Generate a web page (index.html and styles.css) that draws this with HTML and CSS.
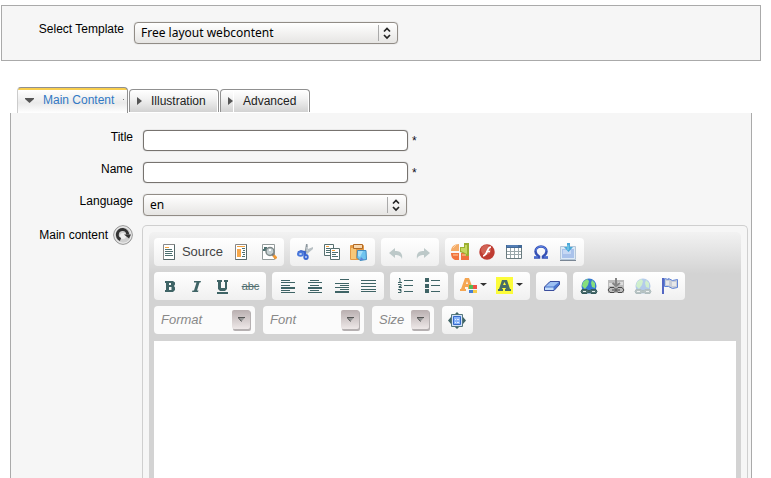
FILE: index.html
```html
<!DOCTYPE html>
<html lang="en">
<head>
<meta charset="utf-8">
<title>Edit web content</title>
<link rel="stylesheet" href="styles.css">
</head>
<body>
<form class="page">
  <section class="template-bar">
    <label class="label" for="template">Select Template</label>
    <span class="dropdown">
      <select id="template"><option>Free layout webcontent</option></select>
      <svg class="updown" width="20" height="18" viewBox="0 0 20 18"><path d="M.5 1v16" stroke="#aaa" fill="none"/><path d="M6 7.500l3-3 3 3M6 11l3 3 3-3" stroke="#222" stroke-width="1.700" fill="none"/></svg>
    </span>
  </section>

  <nav class="tabs">
    <button type="button" class="tab tab-active"><svg width="9" height="5" viewBox="0 0 9 5"><path d="M0 0h9v1L4.500 5 0 1z" fill="#555"/></svg>Main Content<svg width="2" height="2" viewBox="0 0 2 2"><path d="M0 0h1v1H0z" fill="#777"/></svg></button>
    <button type="button" class="tab"><svg width="5" height="8" viewBox="0 0 5 8"><path d="M0 0l5 4-5 4z" fill="#555"/></svg>Illustration</button>
    <button type="button" class="tab tab-split"><svg width="6" height="22" viewBox="0 0 6 22"><path d="M0 7l5 4-5 4z" fill="#555"/><path d="M5.500 0v22" stroke="#fff"/></svg>Advanced</button>
  </nav>

  <section class="panel">
    <div class="row">
      <label class="label" for="title">Title</label>
      <input class="field" id="title" type="text"><span class="star">*</span>
    </div>
    <div class="row">
      <label class="label" for="name">Name</label>
      <input class="field" id="name" type="text"><span class="star">*</span>
    </div>
    <div class="row">
      <label class="label" for="language">Language</label>
      <span class="dropdown">
        <select id="language"><option>en</option></select>
        <svg class="updown" width="20" height="18" viewBox="0 0 20 18"><path d="M.5 1v16" stroke="#aaa" fill="none"/><path d="M6 7.500l3-3 3 3M6 11l3 3 3-3" stroke="#222" stroke-width="1.700" fill="none"/></svg>
      </span>
    </div>
    <div class="row row-editor">
      <div class="label label-refresh">
        <label for="content">Main content</label>
        <button type="button" class="refresh" aria-label="Refresh"><svg width="20" height="20" viewBox="0 0 20 20"><circle cx="10" cy="10" r="9.300" fill="#cfcfcf" stroke="#8e8e8e"/><circle cx="10" cy="10" r="8.200" fill="none" stroke="#eee"/><circle cx="10" cy="11" r="3" fill="#eee"/><path d="M7.500 14.500A5.200 5.200 0 1 1 14.700 9.500" fill="none" stroke="#333" stroke-width="3"/><path d="M11 9.500h7l-2 4z" fill="#333"/></svg></button>
      </div>
      <div class="editor">
        <div class="editor-body">
          <div class="toolbar">
            <div class="tools">
              <div class="group">
                <button type="button" class="tool tool-source"><svg width="16" height="16" viewBox="0 0 16 16"><path d="M2.500.5h11v15h-11z" fill="#fff" stroke="#888"/><path d="M13.500.5v15h-11" fill="none" stroke="#56696a"/><path d="M4 3.500h4" stroke="#f5a13a"/><path d="M4 5.500h7M4 7.500h8M4 9.500h7M4 11.500h8" stroke="#4d7070"/></svg>Source</button>
                <button type="button" class="tool" aria-label="Templates"><svg width="16" height="16" viewBox="0 0 16 16"><path d="M1.500.5h11v15h-11z" fill="#fff" stroke="#888"/><path d="M12.500.5v15h-11" fill="none" stroke="#56696a"/><path d="M8 4.500h3M9 6.500h2M8 8.500h3M9 10.500h2M8 12.500h3" stroke="#4d7070"/><path d="M3 5h4v8H3z" fill="#f7a84b"/><path d="M3 2.500h8" stroke="#f5a13a"/></svg></button>
                <button type="button" class="tool" aria-label="Preview"><svg width="16" height="16" viewBox="0 0 16 16"><path d="M1.500.5h12v15h-12z" fill="#fff" stroke="#939b9b"/><path d="M2 5h5v2H2zM3 3h3v2H3z" fill="#4d7070"/><circle cx="9" cy="7.500" r="4" fill="#c5d0d2" stroke="#7e8989" stroke-width="1.500"/><path d="M8 5h2v2H8z" fill="#fff"/><path d="M11 10l2 2" stroke="#777" stroke-width="2"/><path d="M12.500 11.500l3 3" stroke="#f09a36" stroke-width="3"/></svg></button>
              </div>
              <div class="group group-tight">
                <button type="button" class="tool" aria-label="Cut"><svg width="16" height="16" viewBox="0 0 16 16"><path d="M9 0l1.500 0 .5 7-2 3-2-2 1-2z" fill="#8b969d"/><path d="M16 3v2L10 10l-2-1 3-4z" fill="#b8c0c4"/><path d="M10 3v4" stroke="#e4e8ea"/><path d="M1 8.500l3-1.500 5 1.500M8 9v5" stroke="#3b62c8" stroke-width="2" fill="none"/><ellipse cx="3.500" cy="10" rx="2.500" ry="1.700" fill="none" stroke="#4978dc" stroke-width="2"/><ellipse cx="9" cy="13" rx="1.700" ry="2" fill="#fff" stroke="#3c68d2" stroke-width="2"/></svg></button>
                <button type="button" class="tool" aria-label="Copy"><svg width="18" height="16" viewBox="0 0 18 16"><path d="M1.500.5h9v11h-9z" fill="#fff" stroke="#566f6f"/><path d="M3 2.500h3" stroke="#f5a13a"/><path d="M3 4.500h4M3 6.500h5M3 8.500h4" stroke="#4d7070"/><path d="M7.500 4.500h9v11h-9z" fill="#fff" stroke="#566f6f"/><path d="M9 6.500h3" stroke="#f5a13a"/><path d="M9 8.500h6M9 10.500h4M9 12.500h6" stroke="#4d7070"/></svg></button>
                <button type="button" class="tool" aria-label="Paste"><svg width="17" height="17" viewBox="0 0 17 17"><rect x="0" y="1" width="14" height="15" rx="1" fill="#e59a45"/><path d="M1 4h5v11H1z" fill="#f8c878"/><path d="M3.500.5h9v4h-9z" fill="#f8d8ae" stroke="#b26925"/><path d="M7.500 6.500H16l.5 9L10 16.500l-3-3z" fill="#70c4ef" stroke="#438cc0"/><path d="M8 7h5l-3 6-2-1z" fill="#a4def8"/><path d="M10 16l1-3 3 3" fill="#5f83d7"/></svg></button>
              </div>
              <div class="group group-tight">
                <button type="button" class="tool" aria-label="Undo"><svg width="16" height="16" viewBox="0 0 16 16"><path d="M1 9l6-5v3c5 0 8 2 7 8-1-3-3-4-7-4v3z" fill="#bdc9c9"/></svg></button>
                <button type="button" class="tool" aria-label="Redo"><svg width="16" height="16" viewBox="0 0 16 16"><path d="M15 9L9 4v3c-5 0-8 2-7 8 1-3 3-4 7-4v3z" fill="#bdc9c9"/></svg></button>
              </div>
              <div class="group group-tight">
                <button type="button" class="tool" aria-label="Image"><svg width="18" height="18" viewBox="0 0 18 18"><path d="M8 1v7H0c0-4 3-7 8-7z" fill="#f4ac68"/><path d="M0 10h8v7H4c-3-1-4-4-4-7z" fill="#f1743e"/><path d="M10 10h8v7h-8z" fill="#ef703d"/><path d="M9 4h4V0h5v13h-4v-2l-5-2z" fill="#9caf30"/><path d="M10 5h4V2h2v9l-6-3z" fill="#c6d860"/><path d="M2 5l3-3M2 12h5M11 12h4" stroke="#ffd0a0"/></svg></button>
                <button type="button" class="tool" aria-label="Flash"><svg width="16" height="16" viewBox="0 0 16 16"><circle cx="8" cy="8" r="7.700" fill="#bf3c32"/><circle cx="7" cy="6" r="5" fill="#d16254"/><path d="M12 3c-3 0-3 3-4 5s-2 4-4 4M7 7.500h4" stroke="#fff" stroke-width="1.700" fill="none"/></svg></button>
                <button type="button" class="tool" aria-label="Table"><svg width="16" height="16" viewBox="0 0 16 16"><path d="M.5 1.500h15v13H.5z" fill="#fff" stroke="#697a7f"/><path d="M0 1h16v3H0z" fill="#416896"/><path d="M1 2h11" stroke="#6491d2"/><path d="M1 7.500h14M1 10.500h14M4.500 4v10M8.500 4v10M12.500 4v10" stroke="#9aa7aa"/></svg></button>
                <button type="button" class="tool" aria-label="Special character"><svg width="16" height="16" viewBox="0 0 16 16"><path d="M1 13.500h5v-1C4 11 2.500 9.500 2.500 7.500c0-3 2.500-5 5.500-5s5.500 2 5.500 5c0 2-1.500 3.500-3.500 5v1h5" fill="none" stroke="#3550b4" stroke-width="2.500"/><path d="M3 7c0-3 2-4.500 5-4.500S13 4 13 7M1 13h4M11 13h4" fill="none" stroke="#5e86e8"/></svg></button>
                <button type="button" class="tool" aria-label="Page break"><svg width="16" height="18" viewBox="0 0 16 18"><path d="M.5 3.500h15v13H.5z" fill="#dce9f6" stroke="#b4c6d8"/><path d="M2 6h12v9H2z" fill="#a9c2eb"/><path d="M3 7h8v4H3z" fill="#c6d8f4"/><path d="M0 17.500h16" stroke="#798694"/><path d="M7 0h3v4h3l-4.500 5L4 4h3z" fill="#4ba8d8"/><path d="M8 2v5" stroke="#8bd7ef"/></svg></button>
              </div>
            </div>
            <div class="tools">
              <div class="group">
                <button type="button" class="tool" aria-label="Bold"><svg width="16" height="16" viewBox="0 0 16 16"><path d="M3 3h8l2 1.500v2L12 8l1 1.500V12l-2 2H3v-2h1V5H3zM7 5v2h2V5zM7 9v3h2.500V9z" fill="#3f6466" fill-rule="evenodd"/></svg></button>
                <button type="button" class="tool" aria-label="Italic"><svg width="16" height="16" viewBox="0 0 16 16"><path d="M5 3h7l-.5 1.500H10.500L8 12.500h1.500L9 14H3l.5-1.500H5L7.500 4.500H5z" fill="#3f6466"/></svg></button>
                <button type="button" class="tool" aria-label="Underline"><svg width="16" height="16" viewBox="0 0 16 16"><path d="M1 2h5v2H5v6h4V4H8V2h4v2h-1v7l-2 2H4l-2-2V4H1z" fill="#3f6466"/><path d="M1 15h11" stroke="#3f6466" stroke-width="2"/></svg></button>
                <button type="button" class="tool tool-strike" aria-label="Strike through"><s>abc</s></button>
              </div>
              <div class="group">
                <button type="button" class="tool" aria-label="Align left"><svg width="16" height="16" viewBox="0 0 16 16"><path d="M1 2.500h9M1 4.500h14M1 7.500h9M1 12.500h9M1 14.500h14" stroke="#3f6466"/><path d="M1 10h14" stroke="#3f6466" stroke-width="2"/></svg></button>
                <button type="button" class="tool" aria-label="Center"><svg width="16" height="16" viewBox="0 0 16 16"><path d="M3 2.500h9M1 4.500h14M3 7.500h9M3 12.500h9M1 14.500h14" stroke="#3f6466"/><path d="M1 10h14" stroke="#3f6466" stroke-width="2"/></svg></button>
                <button type="button" class="tool" aria-label="Align right"><svg width="16" height="16" viewBox="0 0 16 16"><path d="M6 1.500h9M1 5.500h14M6 7.500h9M6 11.500h9" stroke="#3f6466"/><path d="M1 9.500h14" stroke="#3f6466"/><path d="M1 14h14" stroke="#3f6466" stroke-width="2"/></svg></button>
                <button type="button" class="tool" aria-label="Justify"><svg width="16" height="16" viewBox="0 0 16 16"><path d="M0 2.500h15M0 5.500h15M0 8.500h15M0 11.500h15M0 13.500h15" stroke="#3f6466"/></svg></button>
              </div>
              <div class="group">
                <button type="button" class="tool" aria-label="Numbered list"><svg width="17" height="16" viewBox="0 0 17 16"><path d="M7 2.500h9M7 7.500h9M7 13.500h9M2 .5h1v4M1 4.500h4M1 6.500h3v2H2v1h3M1 11.500h3v1H2.500M4 12.500v2H1" stroke="#3f6466" fill="none"/></svg></button>
                <button type="button" class="tool" aria-label="Bulleted list"><svg width="16" height="16" viewBox="0 0 16 16"><path d="M0 0h4v4H0zM0 6h4v4H0zM0 11h4v4H0z" fill="#3f6466"/><path d="M6 2.500h9M6 7.500h9M6 13.500h9" stroke="#3f6466"/></svg></button>
              </div>
              <div class="group">
                <button type="button" class="tool tool-wide" aria-label="Text color"><svg width="28" height="18" viewBox="0 0 28 18"><path d="M2 14H0v-2h1L5 1h4l3 8-1 3H8v-2H5v2h1v2zM6 7h2L7 4z" fill="#f5a652" fill-rule="evenodd"/><path d="M9 8h4v4H9z" fill="#56b957"/><path d="M13 8h4v4h-4z" fill="#f05045"/><path d="M9 13h4v3H9z" fill="#447ed4"/><path d="M13 13h4v3h-4z" fill="#f6cc4a"/><path d="M20 6h7l-3.500 3z" fill="#333"/></svg></button>
                <button type="button" class="tool tool-wide" aria-label="Background color"><svg width="28" height="18" viewBox="0 0 28 18"><path d="M0 0h17v17H0z" fill="#fcfc3a"/><path d="M2 14v-2h1L6 3h5l3 9h1v2H9v-2h1l-.5-1h-3L6 12h1v2zM7 8h3L8.500 5z" fill="#476d67" fill-rule="evenodd"/><path d="M20 6h7l-3.500 3z" fill="#333"/></svg></button>
              </div>
              <div class="group">
                <button type="button" class="tool" aria-label="Remove format"><svg width="16" height="16" viewBox="0 0 16 16"><path d="M.5 9L6 3.500h9.500v3L10 12.500H.5z" fill="#4b77cf" stroke="#3b4d9c"/><path d="M1.500 8.500L6.500 4H15l-5.500 4.500z" fill="#9dc0f2"/><path d="M1 9.500h8.500v2.500H1z" fill="#c2dcfa"/></svg></button>
              </div>
              <div class="group">
                <button type="button" class="tool" aria-label="Link"><svg width="18" height="17" viewBox="0 0 18 17"><circle cx="9" cy="8" r="7.500" fill="#3679d2"/><path d="M3 4l4-3 2 2-1 4-3 4-3-3zM12 2l3 3v5l-3-1-1-4z" fill="#86df7d"/><path d="M2 11.500h5l1 1h2l1-1h5l1 2-1 2h-5l-1-1H8l-1 1H2l-1-2z" fill="#486a6a" stroke="#34595b"/><path d="M3 13.500h3M12 13.500h3" stroke="#e6eeee"/></svg></button>
                <button type="button" class="tool" aria-label="Unlink"><svg width="18" height="17" viewBox="0 0 18 17"><path d="M1 2h16v13H1z" fill="#bbb"/><path d="M2 5h5v3H2zM11 4h5v3h-5z" fill="#ddd"/><path d="M9 0v7M5.500 5L9 8l4-3" stroke="#858585" stroke-width="2" fill="none"/><path d="M3 9.500h4l2 2 2-2h4l2 2.500-2 2.500h-4l-2-2-2 2H3L1 12zM5 12h8" stroke="#484848" fill="none"/></svg></button>
                <button type="button" class="tool tool-off" aria-label="Anchor link"><svg width="18" height="17" viewBox="0 0 18 17"><circle cx="9" cy="8" r="7.500" fill="#3679d2"/><path d="M3 4l4-3 2 2-1 4-3 4-3-3zM12 2l3 3v5l-3-1-1-4z" fill="#86df7d"/><path d="M2 11.500h5l1 1h2l1-1h5l1 2-1 2h-5l-1-1H8l-1 1H2l-1-2z" fill="#486a6a" stroke="#34595b"/><path d="M3 13.500h3M12 13.500h3" stroke="#e6eeee"/></svg></button>
                <button type="button" class="tool" aria-label="Anchor"><svg width="16" height="18" viewBox="0 0 16 18"><path d="M2.500 1.500l4 1v-1l4 2 5-1v8l-5 1-4-2h-4z" fill="#c8cdd7" stroke="#5e82d6"/><path d="M4 4h3v4H4zM10 5h4v4h-4z" fill="#e6e7e9"/><path d="M1 1v16" stroke="#5367c3" stroke-width="2"/></svg></button>
              </div>
            </div>
            <div class="tools tools-combos">
              <span class="combo"><select aria-label="Format"><option>Format</option></select><svg class="combo-arrow" width="19" height="21" viewBox="0 0 19 21"><use href="#arrow"/></svg></span>
              <span class="combo"><select aria-label="Font"><option>Font</option></select><svg class="combo-arrow" width="19" height="21" viewBox="0 0 19 21"><use href="#arrow"/></svg></span>
              <span class="combo combo-small"><select aria-label="Size"><option>Size</option></select><svg class="combo-arrow" width="19" height="21" viewBox="0 0 19 21"><defs><linearGradient id="shade" x2="0" y2="1"><stop stop-color="#b9afb0"/><stop offset="1" stop-color="#eee8e8"/></linearGradient><g id="arrow"><rect x="1" y="1" width="18" height="20" rx="2" fill="#b5b0b1"/><rect width="18" height="19" rx="2" fill="url(#shade)"/><path d="M6 7.500h7l-3.500 4z" fill="#999"/><path d="M6 7.500h7M6.500 8l3 3.500" stroke="#555" fill="none"/></g></defs><use href="#arrow"/></svg></span>
              <div class="group group-tight">
                <button type="button" class="tool" aria-label="Maximize"><svg width="18" height="17" viewBox="0 0 18 17"><path d="M6 3l3-3 3 3zM6 14l3 3 3-3zM3 5v7L0 8.500zM15 5v7l3-3.500z" fill="#3f6466"/><path d="M3.500 2.500h11v12h-11z" fill="#cfe0f8" stroke="#55777a"/><path d="M5.500 4.500h7v8h-7z" fill="#88b3f8" stroke="#3469c9"/><path d="M7 7h1v1H7zM9 7h2v1H9zM7 10h1v1H7zM9 10h2v1H9z" fill="#dceaff"/></svg></button>
              </div>
            </div>
          </div>
          <textarea id="content" class="content"></textarea>
        </div>
      </div>
    </div>
  </section>
</form>
</body>
</html>
```

FILE: styles.css
```css
* { box-sizing: border-box; }

body {
  margin: 0;
  background: #fff;
  color: #000;
  font: 12px/16px "Liberation Sans", Arial, sans-serif;
}

button, select, input, textarea { margin: 0; font: inherit; color: inherit; }
button { padding: 0; border: 0; background: none; }
svg { display: block; flex: none; }

.page {
  display: flex;
  flex-direction: column;
  height: 100vh;
  padding: 5px 10px 0 1px;
  overflow: hidden;
}

.template-bar {
  display: flex;
  gap: 10px;
  flex: none;
  padding: 15px 0 16px;
  border: 1px solid #aaa;
  background: #f6f6f6;
}

.label { flex: none; width: 122px; text-align: right; }

.dropdown { position: relative; width: 264px; margin-top: 1px; }
.dropdown select {
  display: block;
  width: 100%;
  height: 22px;
  padding: 0 24px 0 6px;
  appearance: none;
  border: 1px solid #918c86;
  border-radius: 4px;
  background: linear-gradient(#fff, #e6e5e3);
  box-shadow: 0 0 1px #aaa;
  color: #000;
  font: 12px/20px "Noto Sans", sans-serif;
}
.updown { position: absolute; top: 2px; right: 0; pointer-events: none; }

.tabs {
  display: flex;
  align-items: flex-end;
  gap: 1px;
  flex: none;
  margin-top: 26px;
  padding-left: 16px;
}
.tab {
  display: flex;
  align-items: center;
  gap: 9px;
  width: 90px;
  height: 23px;
  margin-bottom: 1px;
  padding-left: 7px;
  border: 1px solid #909090;
  border-bottom: 0;
  border-radius: 4px 4px 0 0;
  background: linear-gradient(#fff, #f2f2f2 40%, #d2d2d2);
  box-shadow: inset -1px 1px #fff;
  color: #222;
}
.tab-active {
  width: 111px;
  height: 26px;
  margin-bottom: 0;
  padding-bottom: 1px;
  border-left-color: #ccc;
  background: linear-gradient(#f8ce4e 2px, #fff 2px, #eaeaea 60%, #fff);
  box-shadow: none;
  color: #3279c4;
}

.panel {
  display: flex;
  flex-direction: column;
  flex: 1;
  min-height: 0;
  margin: 0 9px;
  padding: 16px 3px 0 0;
  border: solid #aaa;
  border-width: 0 1px;
  background: #f6f6f6;
}
.row { display: flex; gap: 10px; height: 32px; flex: none; }

.field {
  width: 265px;
  height: 21px;
  margin-top: 1px;
  padding: 0 6px;
  border: 1px solid #77736f;
  border-radius: 4px;
  background: #fff;
  box-shadow: 0 0 1px #888;
}
.star { margin: 4px 0 0 -6px; color: #112; }

.row-editor { gap: 9px; flex: 1; height: auto; min-height: 0; }
.label-refresh {
  display: flex;
  align-items: center;
  justify-content: flex-end;
  gap: 5px;
  height: 20px;
}

.editor {
  display: flex;
  flex: 1;
  min-width: 0;
  padding: 6px 6px 0;
  border: 1px solid #cfcfcf;
  border-bottom: 0;
  border-radius: 5px 5px 0 0;
}
.editor-body {
  display: flex;
  flex-direction: column;
  flex: 1;
  min-width: 0;
  padding: 6px 5px 0;
  border-radius: 5px 5px 0 0;
  background: linear-gradient(#f2f2f2, #d3d3d3 42px);
}
.toolbar { display: flex; flex-direction: column; gap: 6px; padding-bottom: 7px; }
.tools { display: flex; gap: 6px; }
.tools-combos { gap: 8px; }

.group {
  display: flex;
  height: 28px;
  padding: 0 2px;
  border-radius: 4px;
  background: linear-gradient(#fff, #f0f0f0);
}
.group-tight { padding: 0 3px 0 1px; }
.tool { display: flex; align-items: center; justify-content: center; width: 27px; height: 28px; }
.tool-source { gap: 5px; width: 72px; color: #444; font-size: 13px; }
.tool-wide { width: 36px; }
.tool-strike { color: #526f70; font-size: 11px; }
.tool-off { opacity: .35; }

.combo { position: relative; width: 101px; }
.combo-small { width: 62px; }
.combo select {
  display: block;
  width: 100%;
  height: 28px;
  padding: 0 24px 0 7px;
  appearance: none;
  border: 0;
  border-radius: 4px;
  background: #fbfbfb;
  color: #888;
  font-size: 13px;
  font-style: italic;
}
.combo-arrow { position: absolute; top: 4px; right: 4px; pointer-events: none; }

.content { flex: 1; width: 100%; min-height: 0; border: 0; background: #fff; resize: none; }
```
